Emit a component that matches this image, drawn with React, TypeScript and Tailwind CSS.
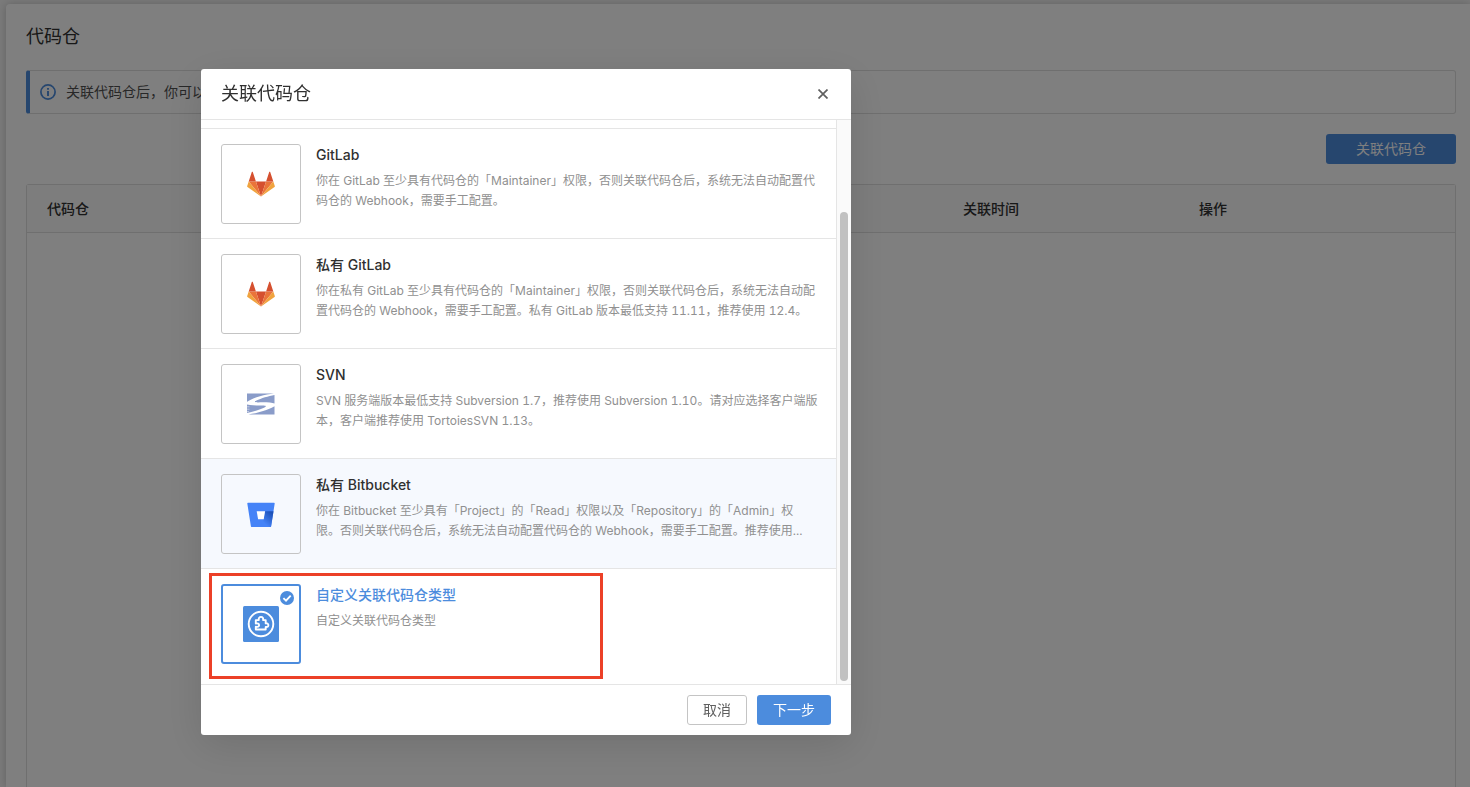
import type { ReactNode } from "react";

function GitLabLogo() {
  return (
    <svg width="28" height="26" viewBox="0 0 28 26">
      <path d="M14 25.5 19.1 10.6H8.9z" fill="#d5502f" />
      <path d="M14 25.5 8.9 10.6H1.7z" fill="#ea7439" />
      <path d="M1.7 10.6.2 14.9c-.2.5 0 .9.3 1.2L14 25.5z" fill="#f0a33e" />
      <path d="M1.7 10.6h7.2L5.8 1.1c-.15-.5-.8-.5-1 0z" fill="#d5502f" />
      <path d="M14 25.5 19.1 10.6h7.2z" fill="#ea7439" />
      <path d="M26.3 10.6 27.8 14.9c.2.5 0 .9-.3 1.2L14 25.5z" fill="#f0a33e" />
      <path d="M26.3 10.6h-7.2l3.1-9.5c.15-.5.8-.5 1 0z" fill="#d5502f" />
    </svg>
  );
}

function SvnLogo() {
  return (
    <svg width="28" height="22" viewBox="0 0 28 22">
      <path d="M0 .5h27C18 1.6 7.500 4 .5 8.500L0 9z" fill="#8a9cc9" />
      <path d="M27.500 2v8.500c-2.500-1-8.500-1.300-16.500-1.100-3.500 0-4-.7-1.500-1.900C14 5.300 21.500 3.200 27.500 2z" fill="#8a9cc9" />
      <path d="M0 11.600c4.500.9 10 1.100 15.500 1 4 0 4.300.9 1.500 2.200C12.500 16.900 5.500 18.800 0 20z" fill="#8a9cc9" />
      <path d="M27.500 13.300v8.200H1.500C10.500 20 20.500 17.500 27.500 13.300z" fill="#8a9cc9" />
      <path d="M0 13.800h2.500M0 16.200h2.500M0 18.600h2" stroke="#fff" strokeWidth=".5" />
    </svg>
  );
}

function BitbucketLogo() {
  return (
    <svg className="mt-0.5" width="28" height="26" viewBox="0 0 28 26">
      <defs>
        <linearGradient id="bucket-shade" x1="26" y1="9" x2="16" y2="20" gradientUnits="userSpaceOnUse">
          <stop offset=".15" stopColor="#1c51b8" />
          <stop offset="1" stopColor="#4583f7" />
        </linearGradient>
      </defs>
      <path d="M1 .7h26c.5 0 .8.3.7.8L24.100 24.200c-.1.600-.5.900-1 .900H4.900c-.5 0-.9-.3-1-.900L.3 1.500C.2 1 .5.700 1 .7z" fill="#4583f7" />
      <path d="M18 9.300h8.500l-2.400 14.900c-.1.600-.5.900-1 .900H15.500l1-7.800z" fill="url(#bucket-shade)" />
      <path d="M9.700 9.300h8.400l-1.400 8h-5.600z" fill="#fff" />
    </svg>
  );
}

function PluginLogo() {
  return (
    <svg width="36" height="36" viewBox="0 0 36 36" fill="none" stroke="#fff">
      <rect width="36" height="36" rx="1.500" fill="#4c8cdd" stroke="none" />
      <circle cx="18" cy="18" r="12.300" strokeWidth="1.900" />
      <path
        d="M12.800 14.100h3c-.4-2 .6-3.200 2.200-3.200s2.500 1.200 2.100 3.200h2.600v3.300c1.700-.4 2.700.5 2.700 1.800s-1 2.100-2.700 1.700v2.600h-9.900v-2.700c2 .3 3.300-.3 3.300-1.600s-1.300-2.200-3.300-1.700z"
        strokeWidth="1.900"
        strokeLinejoin="round"
      />
    </svg>
  );
}

type Repo = { title: string; lines: string[]; logo: ReactNode; hovered?: boolean; selected?: boolean };

const repos: Repo[] = [
  {
    title: "GitLab",
    logo: <GitLabLogo />,
    lines: ["你在 GitLab 至少具有代码仓的「Maintainer」权限，否则关联代码仓后，系统无法自动配置代", "码仓的 Webhook，需要手工配置。"],
  },
  {
    title: "私有 GitLab",
    logo: <GitLabLogo />,
    lines: ["你在私有 GitLab 至少具有代码仓的「Maintainer」权限，否则关联代码仓后，系统无法自动配", "置代码仓的 Webhook，需要手工配置。私有 GitLab 版本最低支持 11.11，推荐使用 12.4。"],
  },
  {
    title: "SVN",
    logo: <SvnLogo />,
    lines: ["SVN 服务端版本最低支持 Subversion 1.7，推荐使用 Subversion 1.10。请对应选择客户端版", "本，客户端推荐使用 TortoiesSVN 1.13。"],
  },
  {
    title: "私有 Bitbucket",
    logo: <BitbucketLogo />,
    hovered: true,
    lines: ["你在 Bitbucket 至少具有「Project」的「Read」权限以及「Repository」的「Admin」权", "限。否则关联代码仓后，系统无法自动配置代码仓的 Webhook，需要手工配置。推荐使用..."],
  },
  { title: "自定义关联代码仓类型", logo: <PluginLogo />, selected: true, lines: ["自定义关联代码仓类型"] },
];

function RepoRow({ repo }: { repo: Repo }) {
  return (
    <div className={`flex h-[110px] shrink-0 gap-[15px] border-t border-[#e5e5e5] pt-[15px] pl-5 ${repo.hovered ? "bg-[#f6f9fe]" : "bg-white"}`}>
      <div
        className={`relative flex size-20 shrink-0 items-center justify-center rounded-[3px] ${
          repo.selected ? "border-2 border-[#4c8cdd]" : "border border-[#c4c4c4]"
        }`}
      >
        {repo.logo}
        {repo.selected && (
          <svg className="absolute top-[5px] right-[5px]" width="14" height="14" viewBox="0 0 14 14">
            <circle cx="7" cy="7" r="7" fill="#4c8cdd" />
            <path d="m3.400 7.100 2.600 2.500 4.700-4.900" fill="none" stroke="#fff" strokeWidth="1.900" />
          </svg>
        )}
      </div>
      <div className="whitespace-nowrap">
        <div className={`text-sm leading-[22px] font-medium ${repo.selected ? "text-[#4c8cdd]" : "text-[#303030]"}`}>{repo.title}</div>
        <div className="mt-[5px] text-xs leading-5 text-[#909090] tabular-nums">
          {repo.lines.map((line) => (
            <div key={line}>{line}</div>
          ))}
        </div>
      </div>
    </div>
  );
}

export default function App() {
  return (
    <div className="h-[787px] overflow-hidden bg-[#f5f5f5] pt-1 pl-1.5 font-['Inter','Noto_Sans_CJK_SC',sans-serif] text-[#303030]">
      <main className="flex h-full flex-col rounded-tl-[4px] bg-white pr-3.5 pl-5 shadow-[0_0_8px_rgba(0,0,0,0.2)]">
        <h1 className="mt-[21px] text-lg leading-6">代码仓</h1>
        <div className="mt-[21px] flex h-11 shrink-0 items-center gap-2.5 rounded-[3px] border border-l-4 border-[#dedede] border-l-[#4c8cdd] pl-2.5">
          <svg width="16" height="16" viewBox="0 0 16 16" fill="none" stroke="#4c8cdd">
            <circle cx="8" cy="8" r="7.100" strokeWidth="1.700" />
            <path d="M8 7v5M8 4v1.700" strokeWidth="1.900" />
          </svg>
          <span className="text-sm text-[#505050]">关联代码仓后，你可以</span>
        </div>
        <button className="mt-5 h-[30px] w-[130px] shrink-0 self-end rounded-[3px] bg-[#4c8cdd] text-sm text-white">关联代码仓</button>
        <div className="mt-5 flex-1 rounded-t-[3px] border border-b-0 border-[#dedede]">
          <div className="grid h-12 grid-cols-[916px_236px_1fr] items-center border-b border-[#dedede] bg-[#fafafa] pl-5 text-sm font-medium">
            <span>代码仓</span>
            <span>关联时间</span>
            <span>操作</span>
          </div>
        </div>
      </main>

      <div className="fixed inset-0 bg-black/50 pt-[69px] pl-[201px]">
        <section className="relative flex h-[666px] w-[650px] flex-col rounded-[3px] bg-white shadow-[0_10px_40px_rgba(0,0,0,0.12)]">
          <header className="flex h-[51px] shrink-0 items-center justify-between border-b border-[#e5e5e5] px-5">
            <h2 className="text-lg leading-6">关联代码仓</h2>
            <svg className="mr-[3px]" width="10" height="10" viewBox="0 0 10 10">
              <path d="m.5.5 9 9m0-9-9 9" stroke="#606060" strokeWidth="1.700" />
            </svg>
          </header>
          <div className="flex h-[564px] shrink-0">
            <div className="flex flex-1 flex-col overflow-hidden pt-2">
              {repos.map((repo) => (
                <RepoRow key={repo.title} repo={repo} />
              ))}
            </div>
            <div className="w-[15px] shrink-0 border-l border-[#e5e5e5] bg-[#fafafa] pt-[92px] pl-[3px]">
              <div className="h-[469px] w-2 rounded-full bg-[#c1c1c1]" />
            </div>
          </div>
          <footer className="flex h-[51px] shrink-0 items-center justify-end gap-2.5 border-t border-[#e5e5e5] pr-5 text-sm">
            <button className="h-[30px] w-[60px] rounded-[3px] border border-[#c4c4c4] text-[#606060]">取消</button>
            <button className="h-[30px] w-[74px] rounded-[3px] bg-[#4c8cdd] text-white">下一步</button>
          </footer>
          <div className="pointer-events-none absolute top-[504px] left-2 h-[106px] w-[394px] border-3 border-[#ec4027]" />
        </section>
      </div>
    </div>
  );
}
